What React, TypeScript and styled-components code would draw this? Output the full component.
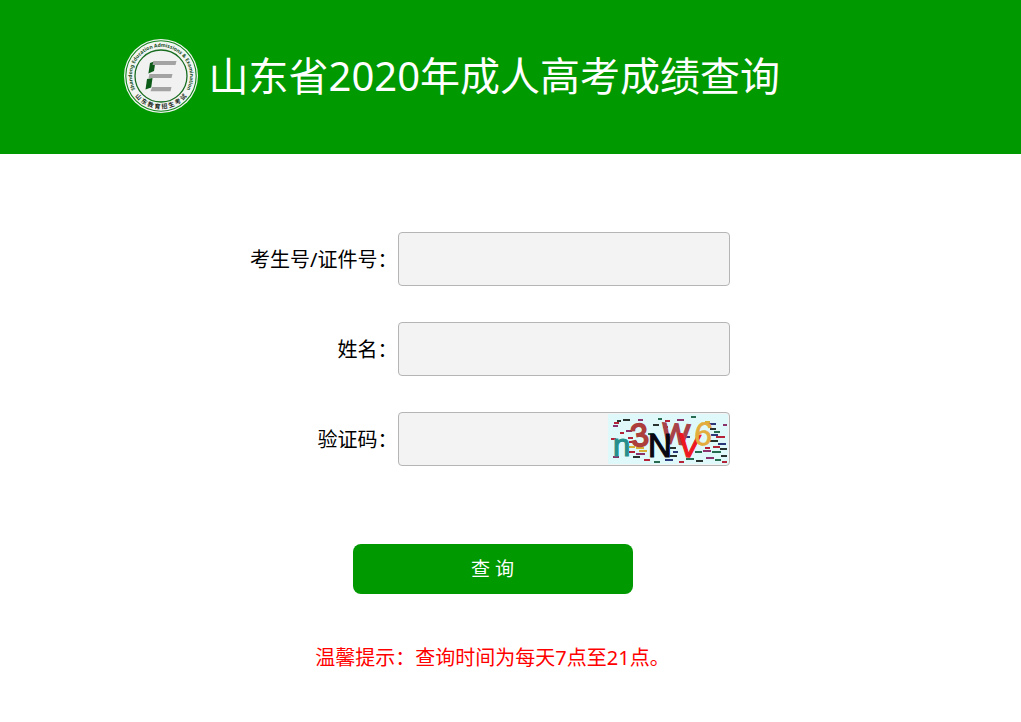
import React from "react";
import styled, { createGlobalStyle } from "styled-components";

const GlobalStyle = createGlobalStyle`
  * { box-sizing: border-box; }
  body {
    margin: 0;
    background: #fff;
    color: #000;
    font-family: "Noto Sans", "Noto Sans CJK SC", sans-serif;
    font-size: 20px;
    line-height: 28px;
  }
`;

const Header = styled.header`
  background: #009900;
  color: #fff;
  padding: 36px 20px 38px;
`;

const HeaderInner = styled.div`
  display: flex;
  align-items: center;
  gap: 8px;
  max-width: 780px;
  margin: 0 auto;
`;

const Logo = styled.svg`
  flex: none;
  width: 80px;
  height: 80px;
`;

const Title = styled.h1`
  margin: 0;
  font-size: 40px;
  line-height: 60px;
  font-weight: 400;
`;

const Form = styled.form`
  display: flex;
  flex-direction: column;
  align-items: center;
  padding: 78px 36px 32px 0;
`;

const Fields = styled.div`
  display: grid;
  gap: 36px;
  margin-right: 6px;
`;

const Field = styled.div`
  display: grid;
  grid-template-columns: 148px 332px;
  align-items: center;
`;

const Label = styled.label`
  padding-top: 2px;
  text-align: right;
  white-space: nowrap;
`;

const InputBox = styled.div`
  display: flex;
  align-items: center;
  height: 54px;
  background: #f3f3f3;
  border: 1px solid #b5b5b5;
  border-radius: 4px;
  overflow: hidden;
`;

const TextInput = styled.input`
  flex: 1;
  min-width: 0;
  height: 100%;
  padding: 0 10px;
  border: 0;
  outline: 0;
  background: transparent;
  font: inherit;
`;

const CaptchaImage = styled.svg`
  flex: none;
  width: 120px;
  height: 50px;
  margin-right: 1px;
`;

const SubmitButton = styled.button`
  width: 280px;
  height: 50px;
  margin-top: 78px;
  border: 0;
  border-radius: 8px;
  background: #009900;
  color: #fff;
  font: inherit;
  font-size: 19px;
  cursor: pointer;
`;

const Notice = styled.p`
  margin: 50px 0 0;
  color: #f00;
`;

function Emblem() {
  return (
    <Logo viewBox="0 0 80 80" role="img" aria-label="山东教育招生考试">
      <defs>
        <path id="ring-top" d="M 14.4 53.6 A 29 29 0 1 1 65.6 53.6" />
        <path id="ring-bottom" d="M 9.2 51.2 A 32.8 32.8 0 0 0 70.8 51.2" />
      </defs>
      <circle cx="40" cy="40" r="37" fill="#f2f5f2" />
      <circle cx="40" cy="40" r="35.2" fill="none" stroke="#12851a" strokeWidth="1.1" />
      <circle cx="40" cy="40" r="26" fill="#f0f1f0" stroke="#176c20" strokeWidth="1.3" />
      <g fill="#0d5b19">
        <path d="M29 27 34.5 25 33 35 27.4 37.5Z" />
        <path d="M26 43 31.5 42 30.2 51.5 24.5 53.5Z" />
      </g>
      <g fill="#a3a3a3">
        <path d="M32.5 25 55.5 25 54.5 29 31.5 29Z" />
        <path d="M28.5 38 51.5 38 50.5 42 27.5 42Z" />
        <path d="M31.2 51 50.5 51 49.5 55.2 29.5 55.2Z" />
      </g>
      <text fontSize="5" fontWeight="700" fill="#164d1d">
        <textPath href="#ring-top" startOffset="50%" textAnchor="middle">
          Shandong Education Admissions &amp; Examination
        </textPath>
      </text>
      <text fontSize="6" fontWeight="700" fill="#202820">
        <textPath href="#ring-bottom" startOffset="50%" textAnchor="middle">
          山 东 教 育 招 生 考 试
        </textPath>
      </text>
    </Logo>
  );
}

const speckColors = ["#28332f", "#b52338", "#276b50", "#283879", "#d8af35", "#8a326c"];

/* x, y, width, colour index */
const specks: number[][] = [
  [6, 9, 5, 1], [9, 7, 4, 0], [15, 6, 7, 0], [30, 6, 5, 5], [50, 5, 4, 2], [57, 7, 5, 1],
  [69, 6, 7, 5], [83, 3, 5, 2], [97, 8, 5, 4], [100, 10, 8, 3], [115, 11, 4, 5],
  [5, 12, 5, 5], [18, 17, 6, 5], [45, 11, 6, 0], [55, 13, 5, 1], [102, 15, 6, 0],
  [106, 18, 6, 2], [108, 23, 9, 1], [12, 19, 4, 1], [20, 24, 5, 1], [40, 20, 6, 2],
  [77, 23, 5, 3], [103, 21, 7, 3], [102, 27, 8, 0], [110, 30, 8, 3], [105, 33, 7, 1],
  [112, 35, 7, 0], [97, 34, 5, 1], [3, 25, 5, 1], [21, 28, 8, 1], [28, 34, 8, 4],
  [21, 33, 6, 4], [31, 37, 8, 4], [21, 38, 6, 1], [28, 40, 9, 5], [62, 34, 6, 0],
  [65, 38, 5, 3], [87, 38, 7, 2], [95, 37, 8, 5], [104, 38, 9, 2], [113, 42, 6, 0],
  [5, 43, 6, 5], [25, 43, 7, 0], [36, 46, 6, 1], [46, 48, 6, 2], [57, 46, 8, 3],
  [62, 42, 7, 0], [71, 48, 5, 1], [78, 45, 8, 2], [88, 47, 7, 0], [98, 44, 8, 5],
  [107, 46, 6, 2], [114, 48, 5, 1],
];

function Captcha() {
  return (
    <CaptchaImage viewBox="0 0 120 50" role="img" aria-label="验证码图片">
      <rect width="120" height="50" fill="#dff9fb" />
      {specks.map(([x, y, w, c], i) => (
        <path key={i} d={`M${x} ${y}h${w}`} stroke={speckColors[c]} strokeWidth="1.8" />
      ))}
      <g fontFamily='"Liberation Sans Narrow", "Liberation Sans", sans-serif' strokeWidth="1.2">
        <text x="5" y="42" fontSize="31" fill="#278f8b" stroke="#278f8b">n</text>
        <text x="23" y="32" fontSize="32" fill="#ac3f3c" stroke="#ac3f3c" strokeWidth="1.8" transform="rotate(-8 32 24)">3</text>
        <text x="54" y="30" fontSize="29" fill="#a9434a" stroke="#a9434a" strokeWidth="1.8" transform="rotate(4 68 22)">W</text>
        <text x="40" y="43" fontSize="33" fill="#080812" stroke="#080812">N</text>
        <text x="70" y="43" fontSize="33" fill="#ee1720" stroke="#ee1720" transform="rotate(5 80 33)">V</text>
        <text x="86" y="31" fontSize="33" fill="#e4ac3d" stroke="#e4ac3d" strokeWidth="0.6" transform="rotate(8 95 22)">6</text>
      </g>
    </CaptchaImage>
  );
}

export default function App() {
  return (
    <>
      <GlobalStyle />
      <Header>
        <HeaderInner>
          <Emblem />
          <Title>山东省2020年成人高考成绩查询</Title>
        </HeaderInner>
      </Header>
      <main>
        <Form onSubmit={(event) => event.preventDefault()}>
          <Fields>
            <Field>
              <Label htmlFor="candidate">考生号/证件号：</Label>
              <InputBox><TextInput id="candidate" type="text" /></InputBox>
            </Field>
            <Field>
              <Label htmlFor="name">姓名：</Label>
              <InputBox><TextInput id="name" type="text" /></InputBox>
            </Field>
            <Field>
              <Label htmlFor="code">验证码：</Label>
              <InputBox>
                <TextInput id="code" type="text" />
                <Captcha />
              </InputBox>
            </Field>
          </Fields>
          <SubmitButton type="submit">查 询</SubmitButton>
          <Notice>温馨提示：查询时间为每天7点至21点。</Notice>
        </Form>
      </main>
    </>
  );
}
